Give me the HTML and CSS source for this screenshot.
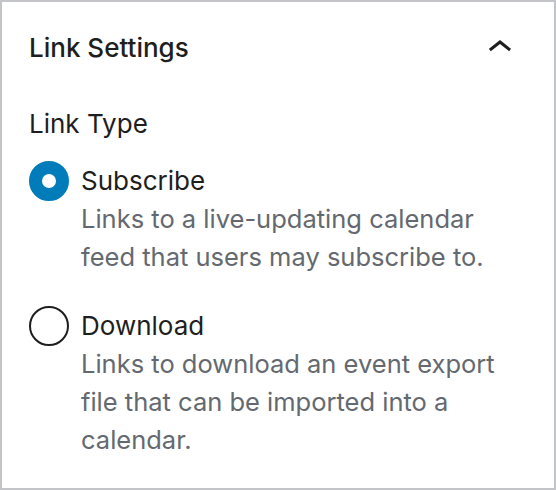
FILE: index.html
```html
<!DOCTYPE html>
<html lang="en">
<head>
<meta charset="utf-8">
<title>Link Settings</title>
<link rel="stylesheet" href="styles.css">
</head>
<body>
<div class="panel">
  <div class="panel-header">
    <h2 class="panel-title">Link Settings</h2>
    <svg class="chevron" viewBox="0 0 24 24" width="48" height="48" aria-hidden="true"><path d="M6.5 12.4L12 8l5.5 4.4-.9 1.2L12 10l-4.6 3.6-1-1.2z"/></svg>
  </div>
  <div class="panel-body">
    <div class="field-label">Link Type</div>
    <div class="options">
      <div class="option">
        <span class="radio checked"></span>
        <div class="option-text">
          <div class="option-label">Subscribe</div>
          <div class="option-help">Links to a live-updating calendar feed that users may subscribe to.</div>
        </div>
      </div>
      <div class="option">
        <span class="radio"></span>
        <div class="option-text">
          <div class="option-label">Download</div>
          <div class="option-help">Links to download an event export file that can be imported into a calendar.</div>
        </div>
      </div>
    </div>
  </div>
</div>
</body>
</html>
```
FILE: styles.css
```css
* { box-sizing: border-box; }
html, body { margin: 0; padding: 0; background: #fff; }
body {
  font-family: Inter, "Noto Sans", "Liberation Sans", sans-serif;
  color: #1e1e1e;
}
.panel {
  width: 556px;
  height: 490px;
  border: 2px solid #c3c4c7;
  background: #fff;
}
.panel-header {
  height: 92px;
  display: flex;
  align-items: center;
  justify-content: space-between;
  padding: 0 30px 0 27px;
}
.panel-title {
  margin: 0;
  font-size: 26px;
  font-weight: 500;
  line-height: 32px;
}
.chevron { display: block; fill: #1e1e1e; }
.panel-body {
  padding: 14px 20px 0 27px;
}
.field-label {
  font-size: 26px;
  line-height: 32px;
  margin-bottom: 22px;
}
.options {
  display: flex;
  flex-direction: column;
  gap: 31px;
}
.option {
  display: flex;
  align-items: flex-start;
  gap: 12px;
}
.radio {
  flex: none;
  width: 40px;
  height: 40px;
  border-radius: 50%;
  border: 2px solid #1e1e1e;
  margin-top: -1px;
  background: #fff;
}
.radio.checked {
  border: 13px solid #007cba;
}
.option-label {
  font-size: 26px;
  line-height: 38px;
}
.option-help {
  font-size: 25.5px;
  line-height: 38px;
  color: #646970;
  max-width: 440px;
}
```
